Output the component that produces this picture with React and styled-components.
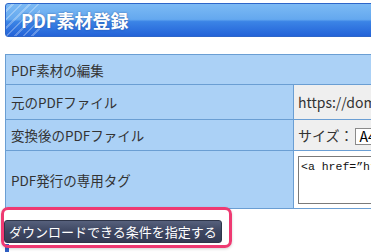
import React from "react";
import styled, { createGlobalStyle } from "styled-components";

const Global = createGlobalStyle`
  html, body { margin: 0; padding: 0; background: #fff; overflow: hidden; }
  body { font-family: "Noto Sans CJK JP", "Noto Sans", sans-serif; color: #333; }
`;

const Page = styled.div`
  position: relative;
  padding: 3px 0 0 5px;
  width: 700px;
`;

const Header = styled.h1`
  margin: 0;
  height: 34px;
  box-sizing: border-box;
  display: flex;
  align-items: center;
  padding-left: 15px;
  border: 1px solid #2d66c9;
  border-radius: 3px;
  background:
    repeating-linear-gradient(135deg, rgba(255,255,255,0) 0 4px, rgba(255,255,255,0.28) 4px 6px) left top / 34px 100% no-repeat,
    linear-gradient(to bottom, #7cbaf4 0%, #64a8ef 48%, #3b84e6 55%, #2463d8 100%);
  color: #fff;
  font-size: 18px;
  font-weight: 700;
  letter-spacing: 0;
  text-shadow: 0 0 2px rgba(20, 50, 120, 0.6);
`;

const Table = styled.table`
  margin-top: 17px;
  border-collapse: collapse;
  width: 620px;
  font-size: 13.5px;
`;

const Row = styled.tr`
  height: ${(p) => p.$h}px;
`;

const Label = styled.th`
  text-align: left;
  font-weight: 400;
  background: #abd1f6;
  border: 1px solid #6a9ed3;
  padding: 0 0 0 5px;
  width: 282px;
  color: #333;
  vertical-align: middle;
`;

const Value = styled.td`
  background: ${(p) => (p.$white ? "#fff" : "#efefef")};
  border: 1px solid #6a9ed3;
  padding: 0 0 0 4px;
  vertical-align: middle;
  white-space: nowrap;
  font-size: 14px;
`;

const Select = styled.span`
  display: inline-block;
  box-sizing: border-box;
  height: 17px;
  line-height: 15px;
  padding: 0 4px;
  border: 1px solid #8a8a8a;
  background: #fff;
  color: #000;
  font-size: 14px;
  vertical-align: middle;
  margin-left: 1px;
`;

const Area = styled.div`
  box-sizing: border-box;
  width: 300px;
  height: 48px;
  border: 1px solid #7a7a7a;
  background: #fff;
  padding: 2px 2px;
  font-family: "Liberation Mono", "DejaVu Sans Mono", monospace;
  font-size: 11.5px;
  color: #111;
  line-height: 15px;
`;

const ButtonRow = styled.div`
  margin-top: 11px;
  margin-left: -1px;
  display: flex;
`;

const Button = styled.button`
  height: 23px;
  padding: 0 4px;
  border: 1px solid #2e3549;
  border-radius: 3px;
  background: linear-gradient(to bottom, #56607c 0%, #3d4661 50%, #343c55 100%);
  color: #fff;
  font-family: "Noto Sans CJK JP", sans-serif;
  font-size: 13px;
  line-height: 21px;
  cursor: pointer;
`;

const NextSection = styled.div`
  margin-top: 1px;
  height: 20px;
  width: 4px;
  background: #2f5fc4;
`;

const Highlight = styled.div`
  position: absolute;
  left: 1px;
  top: 207px;
  width: 231px;
  height: 41px;
  box-sizing: border-box;
  border: 3px solid #ee3a72;
  border-radius: 7px;
  box-shadow: 0 1px 3px rgba(0, 0, 0, 0.18);
  pointer-events: none;
`;

export default function App() {
  return (
    <>
      <Global />
      <Page>
        <Header>PDF素材登録</Header>
        <Table>
          <tbody>
            <Row $h={30}>
              <Label colSpan={2}>PDF素材の編集</Label>
            </Row>
            <Row $h={35}>
              <Label>元のPDFファイル</Label>
              <Value>https://dom.example.jp/pdf/original.pdf</Value>
            </Row>
            <Row $h={31}>
              <Label>変換後のPDFファイル</Label>
              <Value>
                サイズ：<Select>A4</Select>
              </Value>
            </Row>
            <Row $h={58}>
              <Label>PDF発行の専用タグ</Label>
              <Value $white>
                <Area>&lt;a href=”https://example.jp/”&gt;</Area>
              </Value>
            </Row>
          </tbody>
        </Table>
        <ButtonRow>
          <Button>ダウンロードできる条件を指定する</Button>
        </ButtonRow>
        <NextSection />
        <Highlight />
      </Page>
    </>
  );
}
